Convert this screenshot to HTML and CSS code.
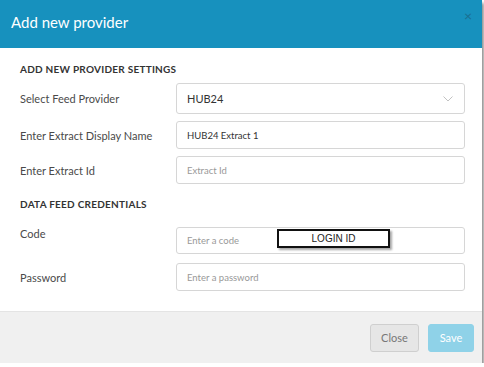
FILE: index.html
```html
<!DOCTYPE html>
<html lang="en">
<head>
    <meta charset="UTF-8">
    <title>Add new provider</title>
    <link rel="stylesheet" href="styles.css">
</head>
<body>
    <div class="modal">
        <header class="modal-header">
            <h1>Add new provider</h1>
            <span class="close-x">&times;</span>
        </header>

        <div class="modal-body">
            <h2 class="section-title">ADD NEW PROVIDER SETTINGS</h2>

            <div class="form-row row-select">
                <label>Select Feed Provider</label>
                <div class="select">
                    <span>HUB24</span>
                    <svg class="chevron" width="10" height="6" viewBox="0 0 10 6"><path d="M0.5 0.5l4.5 4.5 4.5-4.5" fill="none" stroke="#c2c2c2" stroke-width="1"/></svg>
                </div>
            </div>

            <div class="form-row">
                <label>Enter Extract Display Name</label>
                <div class="input">HUB24 Extract 1</div>
            </div>

            <div class="form-row">
                <label>Enter Extract Id</label>
                <div class="input placeholder">Extract Id</div>
            </div>

            <h2 class="section-title second">DATA FEED CREDENTIALS</h2>

            <div class="form-row row-code">
                <label>Code</label>
                <div class="input placeholder">Enter a code</div>
            </div>

            <div class="form-row row-last">
                <label>Password</label>
                <div class="input placeholder">Enter a password</div>
            </div>

            <div class="callout">LOGIN ID</div>
        </div>

        <footer class="modal-footer">
            <button class="btn btn-close">Close</button>
            <button class="btn btn-save">Save</button>
        </footer>
    </div>
</body>
</html>
```

FILE: styles.css
```css
* {
    margin: 0;
    padding: 0;
    box-sizing: border-box;
}

body {
    font-family: 'Lato', 'Open Sans', sans-serif;
    background: #fff;
    color: #444;
}

.modal {
    width: 482px;
    background: #fff;
    box-shadow: 2px 3px 3px rgba(0, 0, 0, 0.45);
}

.modal-header {
    height: 48px;
    background: #1791be;
    display: flex;
    align-items: center;
    justify-content: space-between;
    padding: 0 10px 4px 11px;
}

.modal-header h1 {
    font-size: 15px;
    font-weight: 400;
    color: #fff;
}

.close-x {
    color: #1a6f90;
    font-size: 14px;
    margin-top: -14px;
}

.modal-body {
    position: relative;
    padding: 14px 17px 20px 20px;
}

.section-title {
    font-size: 10px;
    font-weight: 700;
    color: #333;
    height: 14px;
    line-height: 14px;
    margin-bottom: 7px;
    letter-spacing: 0.25px;
}

.section-title.second {
    margin-top: 13px;
    margin-bottom: 13px;
}

.form-row {
    display: grid;
    grid-template-columns: 156px 1fr;
    align-items: center;
    margin-bottom: 7px;
}

.form-row label {
    font-size: 11px;
    color: #4a4a4a;
}

.row-code {
    align-items: start;
    margin-bottom: 9px;
}

.row-code label {
    margin-top: 3px;
}

.row-last {
    margin-bottom: 0;
}

.input,
.select {
    height: 28px;
    border: 1px solid #d6d6d6;
    border-radius: 3px;
    padding: 0 10px;
    display: flex;
    align-items: center;
    font-size: 9.5px;
    color: #333;
}

.select {
    height: 31px;
    font-size: 11px;
    justify-content: space-between;
    padding-right: 11px;
}

.input.placeholder {
    color: #999;
}

.row-code .input {
    height: 27px;
    margin-top: 3px;
}

.callout {
    position: absolute;
    left: 277px;
    top: 181px;
    width: 113px;
    height: 19px;
    border: 2px solid #111;
    background: #fff;
    box-shadow: 2px 2px 2px rgba(0, 0, 0, 0.35);
    font-family: 'Liberation Sans', sans-serif;
    font-size: 10px;
    color: #222;
    text-align: center;
    line-height: 15px;
}

.modal-footer {
    height: 52px;
    background: #f0f0f0;
    border-top: 1px solid #e4e4e4;
    display: flex;
    justify-content: flex-end;
    align-items: center;
    gap: 9px;
    padding: 0 8px 0 0;
}

.btn {
    height: 28px;
    border-radius: 3px;
    font-family: 'Lato', sans-serif;
    font-size: 11px;
    cursor: pointer;
}

.btn-close {
    width: 49px;
    background: #e6e6e6;
    border: 1px solid #cfcfcf;
    color: #777;
}

.btn-save {
    width: 46px;
    background: #8fd2e8;
    border: 1px solid #8fd2e8;
    color: #fff;
}
```
